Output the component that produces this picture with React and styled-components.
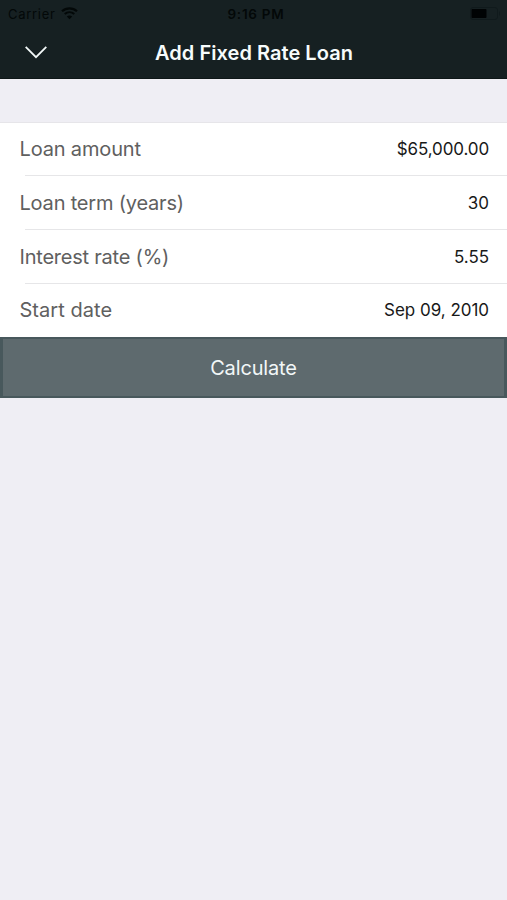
import React from "react"
import styled, { createGlobalStyle } from "styled-components"

const fields = [
    {
        title: "Loan amount",
        value: "$65,000.00",
        spacing: "-0.16px",
        valueSpacing: "-0.12px",
    },
    {
        title: "Loan term (years)",
        value: "30",
        spacing: "-0.2px",
        valueSpacing: "-0.05px",
    },
    {
        title: "Interest rate (%)",
        value: "5.55",
        spacing: "-0.22px",
        valueSpacing: "-0.05px",
    },
    {
        title: "Start date",
        value: "Sep 09, 2010",
        spacing: "0.04px",
        valueSpacing: "-0.03px",
    },
]

export default function App() {
    return (
        <>
            <GlobalStyle />
            <Screen>
                <Header>
                    <StatusBar>
                        <Carrier>
                            <span>Carrier</span>
                            <WifiIcon />
                        </Carrier>
                        <Time>9:16 PM</Time>
                        <BatteryIcon />
                    </StatusBar>
                    <NavBar>
                        <BackButton aria-label="Close">
                            <ChevronIcon />
                        </BackButton>
                        <Title>Add Fixed Rate Loan</Title>
                    </NavBar>
                </Header>

                <Form>
                    {fields.map((field) => (
                        <Row key={field.title}>
                            <Label $spacing={field.spacing}>{field.title}</Label>
                            <Value $spacing={field.valueSpacing}>{field.value}</Value>
                        </Row>
                    ))}
                </Form>
                <CalculateButton>Calculate</CalculateButton>
            </Screen>
        </>
    )
}

const WifiIcon = () => (
    <svg width="17" height="13" viewBox="0 0 17 13" fill="none" stroke="#030808">
        <path d="M1 4.3C5.3 0.4 11.7 0.4 16 4.3" strokeWidth="2.2" />
        <path d="M3.7 7.1C6.5 4.6 10.5 4.6 13.3 7.1" strokeWidth="2" />
        <path d="M8.5 12.2L5.8 9.4C7.4 8.1 9.6 8.1 11.2 9.4Z" fill="#030808" stroke="none" />
    </svg>
)

const BatteryIcon = () => (
    <svg width="32" height="13" viewBox="0 0 32 13">
        <rect x="0.5" y="0.5" width="27" height="12" rx="2.5" fill="none" stroke="#101a1c" />
        <rect x="1.5" y="2" width="15" height="9" rx="1" fill="#000304" />
        <path d="M29.5 4.5V8.5" stroke="#101a1c" />
    </svg>
)

const ChevronIcon = () => (
    <svg width="22" height="13" viewBox="0 0 22 13" fill="none" stroke="#f2f8f8" strokeWidth="1.8">
        <path d="M0.7 0.9L11 11.2L21.3 0.9" />
    </svg>
)

const GlobalStyle = createGlobalStyle`
* {
    box-sizing: border-box;
}

body {
    margin: 0;
    background: #efeef4;
    font-family: Inter, "Liberation Sans", sans-serif;
}

button {
    font-family: inherit;
    margin: 0;
}
`

const Screen = styled.div`
min-height: 900px;
background: #efeef4;
`

const Header = styled.header`
height: 79px;
background: #162022;
border-bottom: 1px solid #0e1718;
`

const StatusBar = styled.div`
display: grid;
grid-template-columns: 1fr auto 1fr;
align-items: center;
height: 27px;
padding: 0 5px 0 8px;
color: #030808;
font-size: 13px;
line-height: 16px;

> :last-child {
    justify-self: end;
}
`

const Carrier = styled.div`
display: flex;
align-items: center;
gap: 5px;
letter-spacing: 0.7px;
`

const Time = styled.div`
padding-left: 2px;
font-size: 13.5px;
font-weight: 600;
letter-spacing: 0.75px;
`

const NavBar = styled.div`
display: grid;
grid-template-columns: 72px 1fr 72px;
align-items: center;
height: 50px;
`

const BackButton = styled.button`
display: flex;
justify-content: center;
padding: 0;
border: none;
background: none;
`

const Title = styled.h1`
margin: 0;
padding: 2px 0 0 1px;
color: #f7fcfc;
font-size: 20px;
font-weight: 600;
line-height: 24px;
letter-spacing: 0.04px;
text-align: center;
white-space: nowrap;
`

const Form = styled.div`
margin-top: 43px;
border-top: 1px solid #e6e5e9;
background: #fff;
`

const Row = styled.div`
display: flex;
align-items: center;
justify-content: space-between;
height: 54px;
padding: 0 18px 0 19.5px;
/* divider starts a bit to the right of the label */
background: linear-gradient(#e6e6e8, #e6e6e8) 25px 100% / 100% 1px no-repeat;

&:first-child,
&:last-child {
    height: 53px;
    padding-bottom: 1px;
}

&:last-child {
    background: none;
}
`

const Label = styled.div`
color: #606060;
font-size: 20px;
line-height: 24px;
letter-spacing: ${(props) => props.$spacing};
`

const Value = styled.div`
color: #181818;
font-size: 17px;
line-height: 24px;
letter-spacing: ${(props) => props.$spacing};
`

const CalculateButton = styled.button`
display: block;
width: 100%;
height: 61px;
padding: 0;
border: solid #48585c;
border-width: 2px 3px;
background: #5e6a6e;
color: #f2f7f8;
font-size: 20px;
line-height: 24px;
letter-spacing: -0.15px;
`
